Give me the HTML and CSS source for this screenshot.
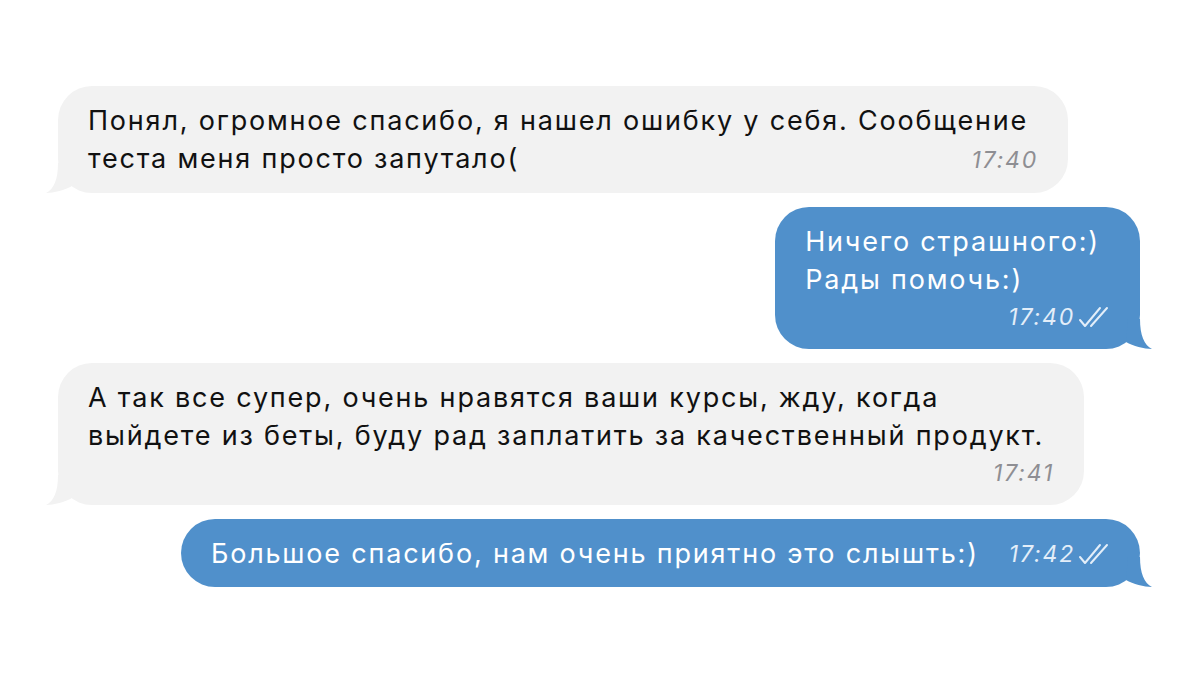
FILE: index.html
```html
<!DOCTYPE html>
<html lang="ru">
<head>
<meta charset="utf-8">
<link rel="stylesheet" href="styles.css">
</head>
<body>
<div class="chat">
  <div class="msg in">
    <p class="text">Понял, огромное спасибо, я нашел ошибку у себя. Сообщение</p>
    <div class="last">
      <span class="text">теста меня просто запутало(</span>
      <span class="time">17:40</span>
    </div>
    <svg class="tail" width="50" height="30" viewBox="0 0 50 30"><path d="M24 0 H12 C12 16 8 26 0 30 C8 30 19 27 26 23 Z"/></svg>
  </div>

  <div class="msg out">
    <p class="text">Ничего страшного:)<br>Рады помочь:)</p>
    <div class="meta">
      <span class="time">17:40</span>
      <svg class="checks" width="32" height="22" viewBox="0 0 32 22"><path d="M2 14 L7 20 L22 2 M13 20 L29 2"/></svg>
    </div>
    <svg class="tail" width="50" height="30" viewBox="0 0 50 30"><path d="M26 0 H38 C38 16 42 26 50 30 C42 30 31 27 24 23 Z"/></svg>
  </div>

  <div class="msg in">
    <p class="text">А так все супер, очень нравятся ваши курсы, жду, когда<br>выйдете из беты, буду рад заплатить за качественный продукт.</p>
    <div class="meta"><span class="time">17:41</span></div>
    <svg class="tail" width="50" height="30" viewBox="0 0 50 30"><path d="M24 0 H12 C12 16 8 26 0 30 C8 30 19 27 26 23 Z"/></svg>
  </div>

  <div class="msg out single">
    <span class="text">Большое спасибо, нам очень приятно это слышть:)</span>
    <span class="meta">
      <span class="time">17:42</span>
      <svg class="checks" width="32" height="22" viewBox="0 0 32 22"><path d="M2 14 L7 20 L22 2 M13 20 L29 2"/></svg>
    </span>
    <svg class="tail" width="50" height="30" viewBox="0 0 50 30"><path d="M26 0 H38 C38 16 42 26 50 30 C42 30 31 27 24 23 Z"/></svg>
  </div>
</div>
</body>
</html>
```

FILE: styles.css
```css
html, body {
  margin: 0;
  padding: 0;
  background: #ffffff;
}

body {
  font-family: Inter, "Liberation Sans", Arial, sans-serif;
  width: 1200px;
  height: 675px;
  overflow: hidden;
}

.chat {
  display: flex;
  flex-direction: column;
  gap: 14px;
  padding: 86px 60px 0 58px;
}

.msg {
  position: relative;
  padding: 16px 40px 14px 30px;
  border-radius: 34px;
  font-size: 27px;
  line-height: 38px;
  letter-spacing: 1.8px;
}

.msg .text {
  margin: 0;
}

.in {
  align-self: flex-start;
  background: #f2f2f2;
  color: #111111;
}

.out {
  align-self: flex-end;
  background: #5090cb;
  color: #ffffff;
}

.last {
  display: flex;
  justify-content: space-between;
  align-items: baseline;
  margin-right: -10px;
}

.meta {
  display: flex;
  justify-content: flex-end;
  align-items: center;
  margin-right: -10px;
  line-height: 36px;
  gap: 3px;
}

.time {
  font-style: italic;
  font-size: 23px;
  letter-spacing: 1.8px;
}

.in .time {
  color: #8e8e93;
}

.out .time {
  color: #e3eef9;
}

.single {
  display: flex;
  align-items: center;
  gap: 30px;
}

.single .meta {
  line-height: 38px;
}

.checks path {
  fill: none;
  stroke: #e3eef9;
  stroke-width: 2;
  stroke-linecap: round;
  stroke-linejoin: round;
}

.tail {
  position: absolute;
  bottom: 0;
}

.in .tail {
  left: -12px;
  fill: #f2f2f2;
}

.out .tail {
  right: -12px;
  fill: #5090cb;
}
```
